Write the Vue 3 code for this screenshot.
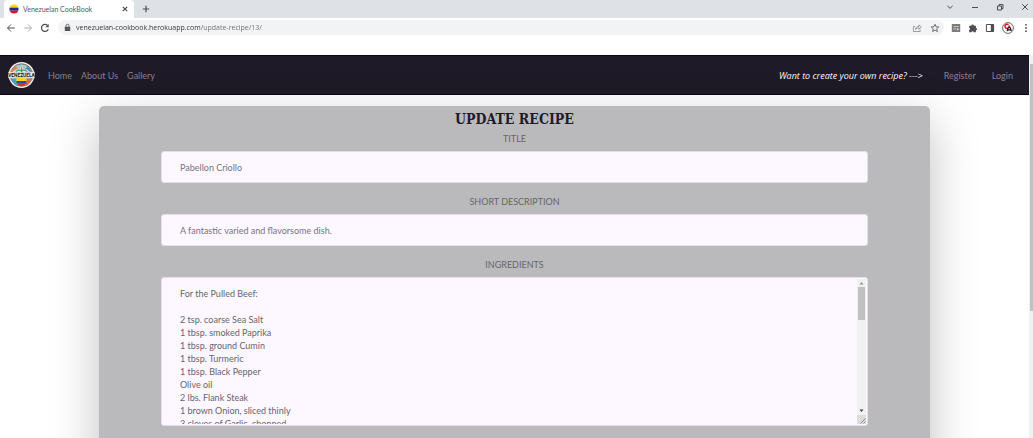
<script setup>
import { ref } from 'vue'

const address = ref('venezuelan-cookbook.herokuapp.com/update-recipe/13/')
const title = ref('Pabellon Criollo')
const description = ref('A fantastic varied and flavorsome dish.')
const ingredients = ref(`For the Pulled Beef:

2 tsp. coarse Sea Salt
1 tbsp. smoked Paprika
1 tbsp. ground Cumin
1 tbsp. Turmeric
1 tbsp. Black Pepper
Olive oil
2 lbs. Flank Steak
1 brown Onion, sliced thinly
3 cloves of Garlic, chopped`)
</script>

<template>
  <div class="window">
    <header class="tabstrip">
      <div class="tab">
        <svg class="flag" viewBox="0 0 10 10" aria-hidden="true">
          <clipPath id="disc"><circle cx="5" cy="5" r="4.6" /></clipPath>
          <g clip-path="url(#disc)">
            <rect width="10" height="4" fill="#ffd500" />
            <rect y="3.7" width="10" height="3" fill="#1d2d8c" />
            <rect y="6.5" width="10" height="4" fill="#dc1430" />
          </g>
        </svg>
        <span class="tab-title">Venezuelan CookBook</span>
        <button class="icon-btn" aria-label="Close tab">
          <svg viewBox="0 0 10 10"><path d="M2.8 2.8l4.4 4.4M7.2 2.8L2.8 7.2" stroke-width="1.2" /></svg>
        </button>
      </div>
      <button class="icon-btn new-tab" aria-label="New tab">
        <svg viewBox="0 0 10 10"><path d="M5 1.8v6.4M1.8 5h6.4" stroke-width="1.2" /></svg>
      </button>
      <div class="window-controls">
        <button class="icon-btn" aria-label="Search tabs">
          <svg viewBox="0 0 10 10"><path d="M2.3 3.7L5 6.4l2.7-2.7" /></svg>
        </button>
        <button class="icon-btn" aria-label="Minimize">
          <svg viewBox="0 0 10 10"><path d="M2 5.5h6" /></svg>
        </button>
        <button class="icon-btn" aria-label="Restore">
          <svg viewBox="0 0 10 10"><path d="M2.5 4h4v4h-4zM4 4V2.6h4v4H6.5" /></svg>
        </button>
        <button class="icon-btn" aria-label="Close window">
          <svg viewBox="0 0 10 10"><path d="M2.2 2.2l5.6 5.6M7.8 2.2L2.2 7.8" /></svg>
        </button>
      </div>
    </header>

    <div class="toolbar">
      <div class="history">
        <button class="icon-btn" aria-label="Back">
          <svg viewBox="0 0 10 10"><path d="M8.8 5H1.6M5 1.5L1.5 5 5 8.5" /></svg>
        </button>
        <button class="icon-btn dim" aria-label="Forward">
          <svg viewBox="0 0 10 10"><path d="M1.2 5h7.2M5 1.5L8.5 5 5 8.5" /></svg>
        </button>
        <button class="icon-btn" aria-label="Reload">
          <svg viewBox="0 0 10 10"><path d="M8.3 6.2A3.5 3.5 0 1 1 7.7 2.7" stroke-width="1.2" /><path d="M8.7 1v3.3H5.4z" class="solid" /></svg>
        </button>
      </div>
      <div class="address">
        <svg class="lock" viewBox="0 0 10 10" aria-hidden="true">
          <rect x="2" y="4.2" width="6" height="4.8" rx=".6" fill="#55585c" />
          <path d="M3.4 4.3V3a1.6 1.6 0 0 1 3.2 0v1.3" fill="none" stroke="#55585c" />
        </svg>
        <label><input v-model="address" class="url" type="text" aria-label="Address" /></label>
        <button class="icon-btn soft" aria-label="Share">
          <svg viewBox="0 0 10 10"><path d="M3.3 3.5H1.4v5h6.8V6.8M3.4 6.5c.3-2.2 1.7-3 3.5-3V1.9L9.3 4.2 6.9 6.4V4.9c-1.5 0-2.6.3-3.5 1.6z" stroke-width=".7" /></svg>
        </button>
        <button class="icon-btn" aria-label="Bookmark">
          <svg viewBox="0 0 10 10"><path d="M5 1.3l1.1 2.5 2.7.2-2.1 1.8.7 2.7L5 7.1 2.6 8.5l.7-2.7L1.2 4l2.7-.2z" stroke-width=".8" /></svg>
        </button>
      </div>
      <div class="extensions">
        <button class="icon-btn" aria-label="Caption extension">
          <svg viewBox="0 0 10 10"><rect x=".8" y="1" width="8.4" height="8" fill="#7d7d7d" stroke="none" /><path d="M2.4 3.6h5.2M2.4 5.8h2.6" stroke="#d9d9d9" stroke-width=".8" /><circle cx="6.7" cy="6.2" r="1" fill="#ddd" stroke="none" /></svg>
        </button>
        <button class="icon-btn" aria-label="Extensions">
          <svg viewBox="0 0 10 10"><path class="solid" d="M1.2 2.8h2.1a1.3 1.3 0 1 1 2.6 0h2v2.1a1.2 1.2 0 1 1 0 2.4v1.9H5.7a1.2 1.2 0 0 0-2.3 0H1.2V7a1.2 1.2 0 0 0 0-2.3z" /></svg>
        </button>
        <button class="icon-btn" aria-label="Side panel">
          <svg viewBox="0 0 10 10"><path d="M1.4 1.5h7.2v7H1.4z" /><path class="solid" d="M5.8 1.5h2.8v7H5.8z" /></svg>
        </button>
        <button class="icon-btn avatar" aria-label="Profile">
          <svg viewBox="0 0 12 12"><circle cx="6" cy="6" r="5.4" fill="#fff" stroke="#444" stroke-width=".8" /><path d="M6.6 2.5C4 1.5 2.6 3.4 3.1 5c.4 1.3 1.6 1.6 2.8 1.1" stroke="#e01b1b" stroke-width="1.5" /><path d="M5.2 9.2L6 6.2c.3-1 2.1-1 2.4 0l.9 3M6 7.8h2.5" stroke="#1c1414" stroke-width="1.2" /><circle cx="7.2" cy="4.3" r="1" fill="#e01b1b" stroke="none" /></svg>
        </button>
        <button class="icon-btn" aria-label="Menu">
          <svg viewBox="0 0 10 10"><circle class="solid" cx="5" cy="1.8" r=".9" /><circle class="solid" cx="5" cy="5" r=".9" /><circle class="solid" cx="5" cy="8.2" r=".9" /></svg>
        </button>
      </div>
    </div>

    <div class="viewport">
      <div class="page">
        <nav class="navbar">
          <a class="brand" href="#" aria-label="Venezuela home">
            <svg viewBox="0 0 28 28">
              <circle cx="14" cy="14" r="13.4" fill="#f1eee9" />
              <circle cx="14" cy="14" r="11.6" fill="#a9c6d0" stroke="#67544b" stroke-width=".8" />
              <path d="M3.2 11A11.4 11.4 0 0 1 8 4.5l2.5 4L6 12z" fill="#d98958" />
              <path d="M24.8 11A11.4 11.4 0 0 0 20 4.5l-2.5 4L22 12z" fill="#5b8cab" />
              <path d="M5 11l4-3 3 1.5L14 3l2 6.5L19 8l4 3z" fill="#e5ece5" />
              <path d="M13.1 11L14 3.5l1 7.5z" fill="#d6583e" />
              <path d="M8 10.5c2-2 10-2 12 0" fill="none" stroke="#5c9a61" stroke-width="1.4" />
              <path d="M2.7 17.5L7 24l2 1.3V18z" fill="#4f9bc7" />
              <path d="M25.3 17.5L21 24l-2 1.3V18z" fill="#d66b4f" />
              <path d="M8.8 17.4q5.2-1.2 10.400 0v3H8.8z" fill="#ffd51c" />
              <path d="M8.8 20.2h10.400v2.5H8.8z" fill="#214cae" />
              <path d="M8.8 22.4h10.400l-2 2.8q-3.2 1-6.4 0z" fill="#d82d32" />
              <path d="M.4 10.7q13.6 2 27.2 0v6.7q-13.6-2-27.2 0z" fill="#eee9df" />
              <text x="14" y="16" text-anchor="middle" class="brand-text">VENEZUELA</text>
            </svg>
          </a>
          <a href="#">Home</a>
          <a href="#">About Us</a>
          <a href="#">Gallery</a>
          <em class="prompt">Want to create your own recipe? ---&gt;</em>
          <div class="account">
            <a href="#">Register</a>
            <a href="#">Login</a>
          </div>
        </nav>

        <main>
          <form class="card" @submit.prevent>
            <h1>UPDATE RECIPE</h1>
            <div class="field">
              <label for="title">TITLE</label>
              <input id="title" v-model="title" type="text" />
            </div>
            <div class="field">
              <label for="description">SHORT DESCRIPTION</label>
              <input id="description" v-model="description" type="text" />
            </div>
            <div class="field">
              <label for="ingredients">INGREDIENTS</label>
              <div class="area">
                <textarea id="ingredients" v-model="ingredients"></textarea>
                <div class="scrollbar" aria-hidden="true">
                  <svg viewBox="0 0 9 8"><path d="M2.5 5.5h4l-2-2.5z" fill="#929292" /></svg>
                  <div class="thumb"></div>
                  <svg class="down" viewBox="0 0 9 8"><path d="M2.5 2.5h4l-2 2.5z" fill="#404040" /></svg>
                  <svg class="grip" viewBox="0 0 9 9"><path d="M3.5 8.5l5-5M6.5 8.5l2-2" stroke="#777" stroke-width=".8" /></svg>
                </div>
              </div>
            </div>
          </form>
        </main>
      </div>
      <div class="page-scroll" aria-hidden="true">
        <div class="page-thumb"></div>
      </div>
    </div>
  </div>
</template>

<style>
body {
  background: #fff;
  overflow: hidden;
}
</style>

<style scoped>
* {
  box-sizing: border-box;
}

.window {
  display: flex;
  flex-direction: column;
  height: 100vh;
  font-family: "Lato", "Open Sans", sans-serif;
  font-size: 9px;
  line-height: 13px;
}

.icon-btn {
  display: block;
  flex: none;
  width: 10px;
  height: 10px;
  padding: 0;
  border: 0;
  background: none;
  color: #4b4e52;
}

.icon-btn svg {
  display: block;
  width: 100%;
  height: 100%;
  fill: none;
  stroke: currentColor;
  stroke-width: 1;
}

.icon-btn .solid {
  fill: currentColor;
  stroke: none;
}

.icon-btn.dim {
  color: #aaadb0;
}

.icon-btn.soft {
  color: #77797c;
}

.tabstrip {
  display: flex;
  flex: none;
  align-items: center;
  height: 18px;
  padding: 0 3px 0 4px;
  background: #dee1e6;
}

.tab {
  display: flex;
  align-items: center;
  width: 130px;
  height: 18px;
  padding: 0 4px 0 5px;
  border-radius: 4px 4px 0 0;
  background: #fff;
}

.flag {
  width: 10px;
  height: 10px;
}

.tab-title {
  flex: 1;
  padding-left: 4px;
  font-size: 7px;
  color: #55585c;
}

.new-tab {
  margin-left: 7px;
}

.window-controls {
  display: flex;
  gap: 15px;
  margin: -4px 0 0 auto;
}

.toolbar {
  display: flex;
  flex: none;
  align-items: center;
  height: 19px;
  padding: 0 2px 0 6px;
}

.history {
  display: flex;
  gap: 7px;
  margin-right: 8px;
}

.address {
  display: flex;
  flex: 1;
  align-items: center;
  gap: 8px;
  height: 15px;
  padding: 0 4px 0 5px;
  border-radius: 8px;
  background: #f1f3f4;
}

.lock {
  width: 9px;
  height: 9px;
}

.address label {
  flex: 1;
  margin-left: -4px;
}

.url {
  display: block;
  width: 100%;
  height: 13px;
  padding: 0;
  border: 0;
  outline: 0;
  background: linear-gradient(90deg, #303338 124px, #6c6f73 124px);
  background-clip: text;
  -webkit-background-clip: text;
  font-family: "Open Sans", sans-serif;
  font-size: 7px;
  color: transparent;
}

.extensions {
  display: flex;
  align-items: center;
  gap: 7px;
  margin-left: 7px;
}

.avatar {
  width: 12px;
  height: 12px;
}

.viewport {
  display: flex;
  flex: 1;
  min-height: 0;
  margin-top: 18px;
}

.page {
  flex: 1;
  min-width: 0;
  overflow: hidden;
}

.navbar {
  display: flex;
  align-items: center;
  gap: 9px;
  height: 40px;
  padding: 0 16px 0 8px;
  border: solid #0b0516;
  border-width: 1px 0;
  background: #1f1a27;
}

.navbar a {
  color: #85818b;
  text-decoration: none;
}

.navbar .brand {
  width: 27px;
  height: 28px;
  margin-right: 4px;
}

.brand svg {
  display: block;
  width: 100%;
  height: 100%;
}

.brand-text {
  font: bold 5px "Roboto", sans-serif;
  fill: #211b1d;
}

.prompt {
  margin-left: auto;
  font-family: "Open Sans", sans-serif;
  color: #fcf8ff;
}

.account {
  display: flex;
  gap: 16px;
  margin-left: 12px;
}

main {
  padding: 11px 99px 0;
}

.card {
  height: 100vh;
  padding: 0 62px;
  border-radius: 5px;
  background: #bababc;
  box-shadow: 0 16px 48px rgba(0, 0, 0, 0.25);
  text-align: center;
}

h1 {
  margin: 0;
  font: bold 14px/26px "DejaVu Serif Condensed", "DejaVu Serif", serif;
  color: #1f1a27;
}

.field {
  margin-bottom: 12px;
}

.field label {
  display: block;
  margin-bottom: 6px;
  color: #67646d;
}

.field input {
  display: block;
  width: 100%;
  height: 32px;
  padding: 0 18px;
  border: 1px solid #e4dfe8;
  border-radius: 3px;
  background: #fdf8ff;
  font: inherit;
  color: #77737e;
}

.area {
  display: flex;
  height: 149px;
  padding: 1px;
  border: 1px solid #e4dfe8;
  border-radius: 3px;
  background: #fdf8ff;
}

.area textarea {
  flex: 1;
  padding: 8px 17px;
  border: 0;
  outline: 0;
  background: none;
  font: inherit;
  color: #67646c;
  resize: none;
  scrollbar-width: none;
}

.scrollbar {
  display: flex;
  flex-direction: column;
  width: 9px;
  background: #f1f1f1;
}

.scrollbar svg {
  flex: none;
  width: 9px;
  height: 8px;
  fill: none;
}

.thumb {
  height: 33px;
  margin: 0 1px;
  background: #c1c1c1;
}

.scrollbar .down {
  margin-top: auto;
}

.scrollbar .grip {
  height: 9px;
  background: #dcdcdc;
}

.page-scroll {
  width: 4px;
  padding: 9px 0 0 1px;
  background: #f1f1f1;
}

.page-thumb {
  height: 66%;
  background: #c1c1c1;
}
</style>
